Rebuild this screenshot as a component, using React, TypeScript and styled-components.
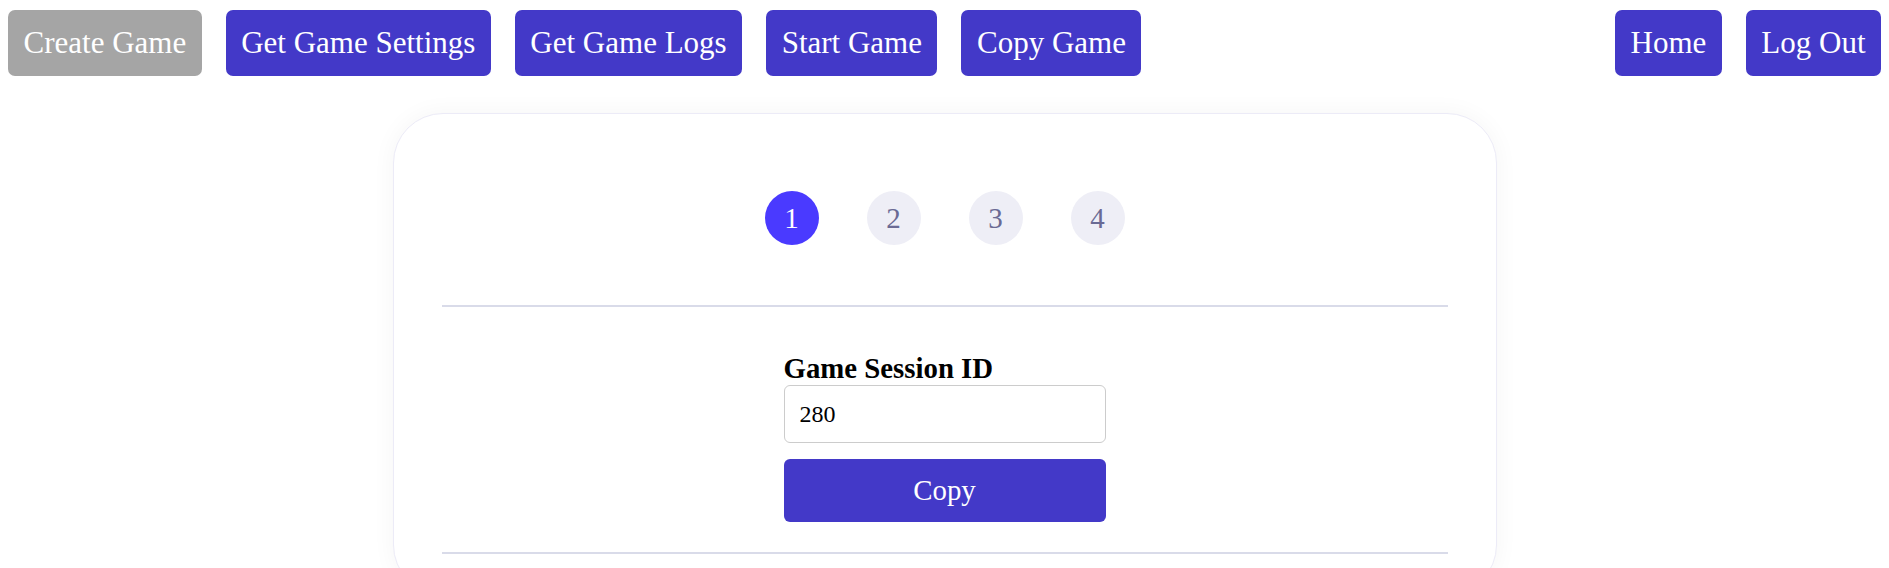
import React from "react";
import styled, { createGlobalStyle } from "styled-components";

const GlobalStyle = createGlobalStyle`
  body {
    margin: 8px;
    background: #ffffff;
    font-family: "Liberation Serif", "Times New Roman", serif;
  }
`;

const NavBar = styled.nav`
  display: flex;
  justify-content: space-between;
  align-items: center;
  padding-top: 2px;
`;

const NavGroup = styled.div`
  display: flex;
  gap: 24px;
`;

const NavButton = styled.button<{ $disabled?: boolean }>`
  height: 66px;
  padding: 0 15.5px;
  border: none;
  border-radius: 7px;
  background: ${(p) => (p.$disabled ? "#a5a5a5" : "#4339c8")};
  color: #ffffff;
  font-family: "Liberation Serif", "Times New Roman", serif;
  font-size: 31px;
  white-space: nowrap;
  cursor: pointer;
`;

const Card = styled.section`
  width: 1104px;
  box-sizing: border-box;
  margin: 37px auto 0;
  padding: 77px 48px 40px;
  border: 1px solid #ecebf7;
  border-radius: 50px;
  background: #ffffff;
  box-shadow: 0 0 24px rgba(0, 0, 20, 0.045);
`;

const Steps = styled.div`
  display: flex;
  justify-content: center;
  gap: 48px;
`;

const StepDot = styled.div<{ $active?: boolean }>`
  width: 54px;
  height: 54px;
  border-radius: 50%;
  display: flex;
  align-items: center;
  justify-content: center;
  background: ${(p) => (p.$active ? "#4a3aff" : "#eeeef6")};
  color: ${(p) => (p.$active ? "#ffffff" : "#6a6a94")};
  font-size: 29px;
`;

const Divider = styled.hr`
  border: none;
  height: 2px;
  background: #d9dbe9;
  margin: 0;
`;

const TopDivider = styled(Divider)`
  margin-top: 60px;
`;

const Form = styled.div`
  width: 322px;
  margin: 45px auto 30px;
  display: flex;
  flex-direction: column;
`;

const Label = styled.label`
  font-size: 28.8px;
  font-weight: bold;
  color: #000000;
  line-height: 33px;
`;

const Input = styled.input`
  box-sizing: border-box;
  height: 58px;
  width: 100%;
  padding: 0 15px;
  border: 1px solid #cccccc;
  border-radius: 6px;
  font-family: "Liberation Serif", "Times New Roman", serif;
  font-size: 24px;
  color: #000000;
  outline: none;
`;

const CopyButton = styled.button`
  margin-top: 16px;
  height: 63px;
  width: 100%;
  border: none;
  border-radius: 6px;
  background: #4339c8;
  color: #ffffff;
  font-family: "Liberation Serif", "Times New Roman", serif;
  font-size: 28.8px;
  cursor: pointer;
`;

export default function App() {
  return (
    <>
      <GlobalStyle />
      <NavBar>
        <NavGroup>
          <NavButton $disabled>Create Game</NavButton>
          <NavButton>Get Game Settings</NavButton>
          <NavButton>Get Game Logs</NavButton>
          <NavButton>Start Game</NavButton>
          <NavButton>Copy Game</NavButton>
        </NavGroup>
        <NavGroup>
          <NavButton>Home</NavButton>
          <NavButton>Log Out</NavButton>
        </NavGroup>
      </NavBar>
      <Card>
        <Steps>
          <StepDot $active>1</StepDot>
          <StepDot>2</StepDot>
          <StepDot>3</StepDot>
          <StepDot>4</StepDot>
        </Steps>
        <TopDivider />
        <Form>
          <Label htmlFor="session">Game Session ID</Label>
          <Input id="session" defaultValue="280" />
          <CopyButton>Copy</CopyButton>
        </Form>
        <Divider />
      </Card>
    </>
  );
}
